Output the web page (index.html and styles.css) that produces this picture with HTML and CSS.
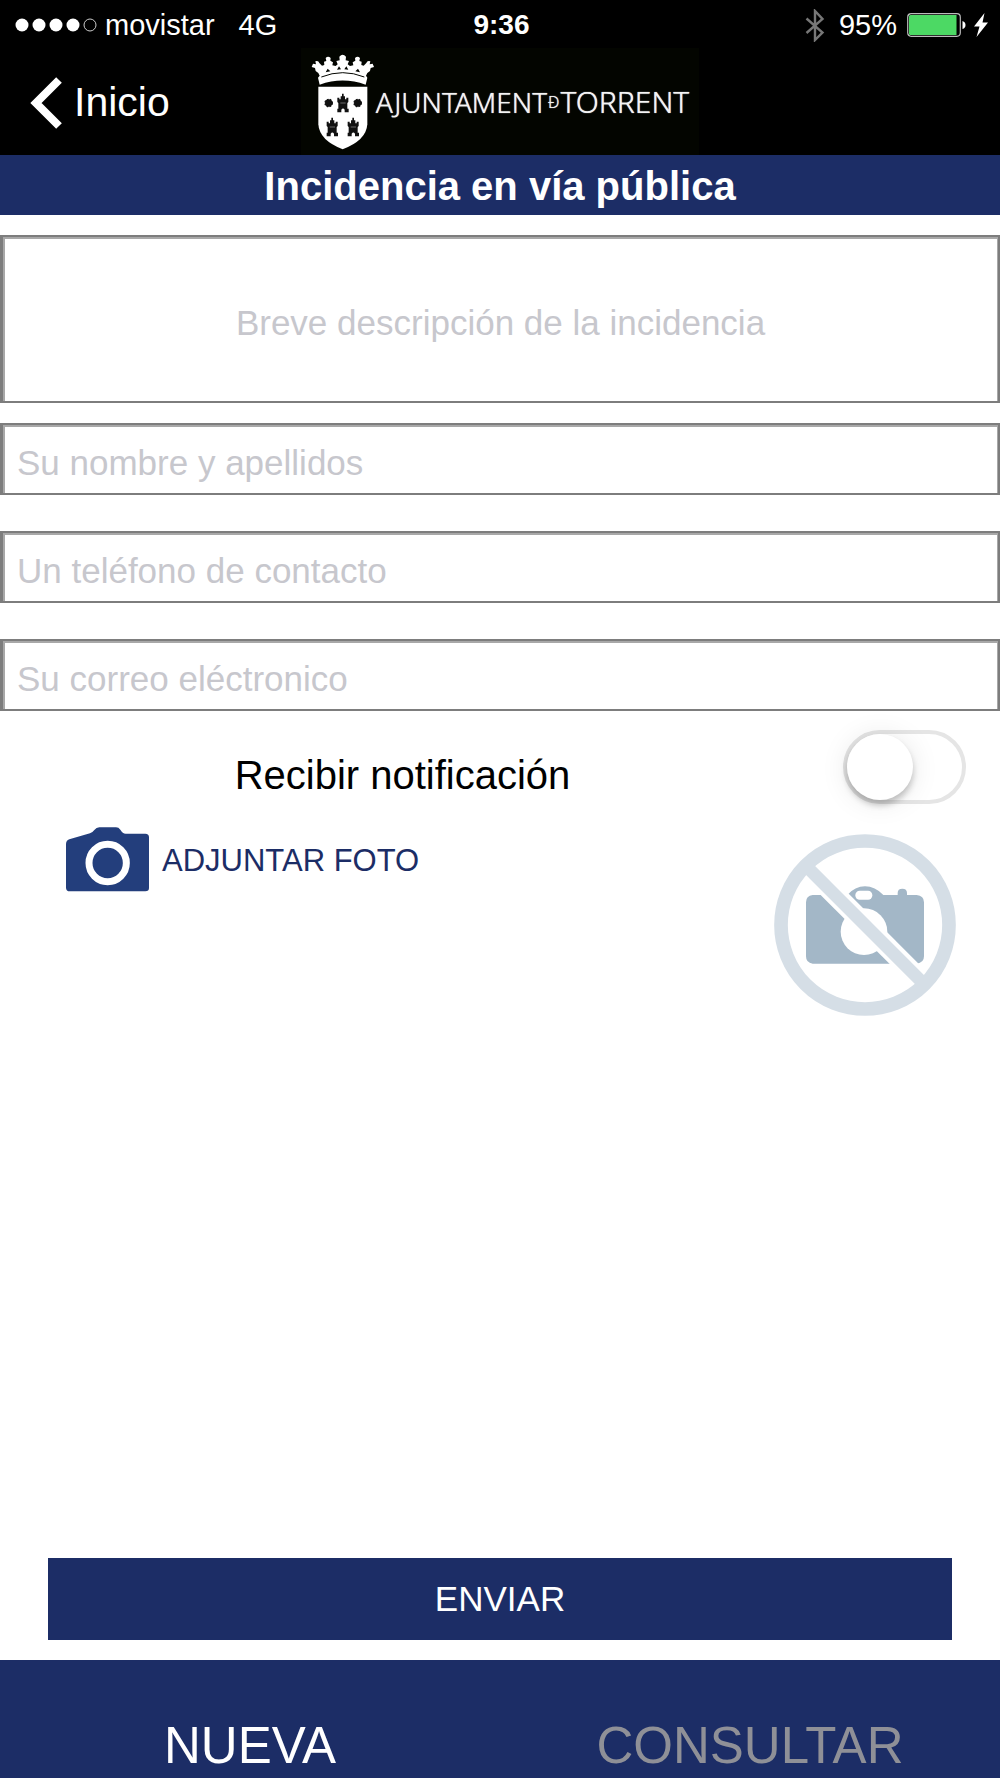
FILE: index.html
```html
<!DOCTYPE html>
<html lang="es">
<head>
<meta charset="utf-8">
<meta name="viewport" content="width=device-width, initial-scale=1">
<title>Incidencia en vía pública</title>
<link rel="stylesheet" href="styles.css">
</head>
<body>
<div class="app">
  <div class="status">
    <div class="status-left">
      <svg class="signal" width="82" height="14" viewBox="0 0 82 14" aria-hidden="true">
        <g fill="#fff"><circle cx="7" cy="7" r="6.5"/><circle cx="24" cy="7" r="6.5"/><circle cx="41" cy="7" r="6.5"/><circle cx="58" cy="7" r="6.5"/></g>
        <circle cx="75" cy="7" r="6" fill="none" stroke="#ccc"/>
      </svg>
      <span>movistar</span>
      <span class="network">4G</span>
    </div>
    <span class="clock">9:36</span>
    <div class="status-right">
      <svg width="20" height="33" viewBox="0 0 20 33" fill="none" stroke="#777" stroke-width="2.400" aria-hidden="true"><path d="M1.500 9.500 17.500 23.500 10 31V2l7.500 8L1.500 24"/></svg>
      <span>95%</span>
      <svg class="battery" width="59" height="24" viewBox="0 0 59 24" aria-hidden="true">
        <rect x=".7" y=".7" width="52.600" height="22.600" rx="3.500" fill="#000" stroke="#bbb" stroke-width="1.200"/>
        <path d="M3.500 2H49.500V22H3.500Q2 22 2 20.500V3.500Q2 2 3.500 2Z" fill="#4cd964"/>
        <path d="M55.500 8Q58.500 9 58.500 12T55.500 16Z" fill="#fff"/>
      </svg>
      <svg width="14" height="24" viewBox="0 0 14 24" aria-hidden="true"><path d="M10.500 0 0 13.500H5.500L2.500 24 14 9.500H8.500Z" fill="#fff"/></svg>
    </div>
  </div>

  <header class="header">
    <a class="back" href="#inicio">
      <svg width="32" height="52" viewBox="0 0 32 52" aria-hidden="true"><path d="M29 3 6 26 29 49" fill="none" stroke="#fff" stroke-width="8"/></svg>
      <span>Inicio</span>
    </a>
    <div class="logo">
      <svg class="crest" width="64" height="97" viewBox="60 38 192 291" aria-hidden="true">
        <g fill="#fff">
          <path d="M86 133 81 112 86 106Q84 97 74 92L72 83 62 80 66 70 75 72 73 63Q82 59 85 68L93 76 100 74 99 64 106 62 104 53Q111 46 119 53L118 61 126 66 124 75 134 77 140 72 136 62 146 60 145 49Q155 37 165 49L164 60 174 62 170 72 177 77 187 75 185 66 193 61 192 53Q200 46 207 53L205 62 212 64 211 74 218 76 226 68Q229 59 238 63L236 72 245 70 249 80 239 83 237 92Q227 97 225 106L229 112 224 133Q155 108 86 133Z"/>
          <path d="M82 139H229V252Q226 300 155 327Q85 300 82 252Z"/>
        </g>
        <path d="M91 110Q155 84 220 110" fill="none" stroke="#030500" stroke-width="3"/>
        <g fill="#030500"><path d="M104 96 110 85 118 93ZM138 88 144 78 150 87ZM160 87 166 78 172 88ZM193 93 201 85 207 96Z"/></g>
        <g fill="#111">
          <g id="torre"><path d="M139 216V205H142V188L139 185V172H145V177H149V168H153V160H158V168H162V177H166V172H172V185L169 188V205H173V216H161V208Q156 201 151 208V216Z"/></g>
          <use href="#torre" x="-32" y="72"/><use href="#torre" x="31" y="72"/>
        </g>
        <path d="M148 188H164M116 260H132M179 260H195" stroke="#999" stroke-width="2"/>
        <g fill="#111" stroke="#111" stroke-width="4" stroke-dasharray="5 4"><circle cx="113" cy="188" r="11"/><circle cx="200" cy="188" r="11"/></g>
      </svg>
      <span class="wordmark">AJUNTAMENT<small>Ð</small><b>TORRENT</b></span>
    </div>
  </header>

  <h1 class="title">Incidencia en vía pública</h1>

  <form class="form">
    <textarea class="field field-area" aria-label="Breve descripción de la incidencia" placeholder="Breve descripción de la incidencia"></textarea>
    <div class="contact">
      <input class="field" type="text" aria-label="Su nombre y apellidos" placeholder="Su nombre y apellidos">
      <input class="field" type="tel" aria-label="Un teléfono de contacto" placeholder="Un teléfono de contacto">
      <input class="field" type="email" aria-label="Su correo eléctronico" placeholder="Su correo eléctronico">
    </div>
    <div class="notify">
      <label class="notify-label" for="notificacion">Recibir notificación</label>
      <input class="switch" type="checkbox" role="switch" id="notificacion">
    </div>
    <div class="photo">
      <button class="attach" type="button">
        <svg width="83" height="65" viewBox="78 261 249 195" aria-hidden="true">
          <path d="M78 312Q78 302 88 298L150 280Q158 277 163 270Q169 262 178 262H228Q236 262 241 269Q248 281 257 281H316Q327 281 327 292V444Q327 454 316 454H90Q78 454 78 443Z" fill="#233e7c"/>
          <circle cx="203" cy="369" r="56" fill="none" stroke="#fff" stroke-width="21"/>
        </svg>
        <span>ADJUNTAR FOTO</span>
      </button>
      <svg class="no-photo" width="182" height="182" viewBox="42 373 546 546" role="img" aria-label="Sin foto">
        <path d="M158 556H262Q285 530 315 530T370 556H413V550Q413 537 427 537T441 550V556H470Q492 558 492 578V740Q492 760 470 762H158Q138 760 138 740V578Q138 558 158 556Z" fill="#a3b7c7"/>
        <rect x="286" y="543" width="51" height="27" rx="13" fill="#fff"/>
        <circle cx="312" cy="666" r="70" fill="#fff"/>
        <path d="M140 470 490 820" stroke="#fff" stroke-width="62"/>
        <path d="M145 476 482 813" stroke="#d5dee6" stroke-width="38"/>
        <circle cx="315" cy="646" r="252" fill="none" stroke="#d5dee6" stroke-width="41"/>
      </svg>
    </div>
    <button class="send" type="submit">ENVIAR</button>
  </form>

  <nav class="tabs">
    <a class="tab tab-active" href="#nueva">NUEVA</a>
    <a class="tab" href="#consultar">CONSULTAR</a>
  </nav>
</div>
</body>
</html>
```

FILE: styles.css
```css
* {
  box-sizing: border-box;
}

body {
  margin: 0;
  background: #fff;
  color: #000;
  font-family: "Liberation Sans", Arial, sans-serif;
}

svg {
  display: block;
  flex: none;
}

a {
  color: inherit;
  text-decoration: none;
}

button,
input,
textarea {
  margin: 0;
  font-family: inherit;
}

.app {
  display: flex;
  flex-direction: column;
  min-height: 100vh;
}

.status {
  display: grid;
  grid-template-columns: 1fr auto 1fr;
  align-items: center;
  height: 48px;
  padding: 2px 12px 0 15px;
  background: #000;
  color: #fff;
  font-size: 29px;
}

.status-left,
.status-right {
  display: flex;
  align-items: center;
  gap: 8px;
}

.network {
  margin-left: 16px;
}

.clock {
  font-size: 28px;
  font-weight: bold;
}

.status-right {
  justify-content: flex-end;
}

.status-right svg:first-child {
  margin-right: 6px;
}

.battery {
  margin-left: 2px;
}

.header {
  display: grid;
  grid-template-columns: 1fr auto 1fr;
  align-items: center;
  height: 107px;
  background: #000;
  color: #fff;
}

.back {
  display: flex;
  align-items: center;
  gap: 12px;
  padding: 2px 0 0 30px;
  font-size: 41px;
}

.logo {
  display: flex;
  align-items: center;
  gap: 1px;
  height: 107px;
  padding: 0 10px;
  background: #030500;
}

.wordmark {
  display: flex;
  align-items: center;
  color: #f4f4f4;
  font-family: "Noto Sans", sans-serif;
  font-size: 28px;
  font-weight: 300;
  line-height: 40px;
  text-shadow: 0 0 1px #fff;
}

.wordmark small {
  padding: 0 1px;
  font-size: 16px;
  line-height: 32px;
}

.wordmark b {
  font-size: 30px;
  font-weight: 300;
}

.title {
  margin: 0;
  padding-top: 2px;
  background: #1c2d66;
  color: #fff;
  font-size: 40px;
  line-height: 58px;
  text-align: center;
}

.form {
  display: flex;
  flex: 1;
  flex-direction: column;
  padding: 20px 0;
}

.field {
  display: block;
  width: 100%;
  height: 72px;
  padding: 8px 12px 0 14px;
  border: solid #7d7d7d;
  border-width: 2px 2px 2px 3px;
  border-radius: 0;
  outline: 0;
  background: #fff;
  box-shadow: inset 2px 2px #a8a8a8, inset -1px 0 #a8a8a8;
  font-size: 35px;
}

.field::placeholder {
  color: #c7c7cd;
  opacity: 1;
}

.field-area {
  height: 168px;
  padding: 66px 14px 0;
  line-height: 40px;
  text-align: center;
  resize: none;
}

.contact {
  display: flex;
  flex-direction: column;
  gap: 36px;
  margin-top: 20px;
}

.notify {
  display: flex;
  align-items: flex-end;
  gap: 38px;
  padding: 19px 34px 0 0;
}

.notify-label {
  flex: 1;
  font-size: 40px;
  line-height: 58px;
  text-align: center;
}

.switch {
  width: 123px;
  height: 74px;
  border: 4px solid #e5e5e5;
  border-radius: 37px;
  background: #fff;
  appearance: none;
}

.switch::before {
  display: block;
  width: 66px;
  height: 66px;
  border-radius: 50%;
  background: #fff;
  box-shadow: 0 5px 6px rgba(0, 0, 0, .22), 0 2px 28px rgba(0, 0, 0, .1);
  content: "";
}

.switch:checked::before {
  margin-left: auto;
}

.photo {
  display: flex;
  align-items: flex-start;
  justify-content: space-between;
  padding: 23px 44px 40px 66px;
}

.attach {
  display: flex;
  align-items: center;
  gap: 13px;
  padding: 0;
  border: 0;
  background: none;
  color: #1c2d66;
  font-size: 31px;
}

.attach span {
  padding-top: 2px;
}

.no-photo {
  margin-top: 7px;
}

.send {
  height: 82px;
  margin: auto 48px 0;
  border: 0;
  background: #1c2d66;
  color: #fff;
  font-size: 35px;
}

.tabs {
  display: grid;
  grid-template-columns: 1fr 1fr;
  padding: 56px 0 2px;
  background: #1c2d66;
  color: #8f9097;
  font-size: 51px;
  line-height: 60px;
  text-align: center;
}

.tab-active {
  color: #fff;
}
```
